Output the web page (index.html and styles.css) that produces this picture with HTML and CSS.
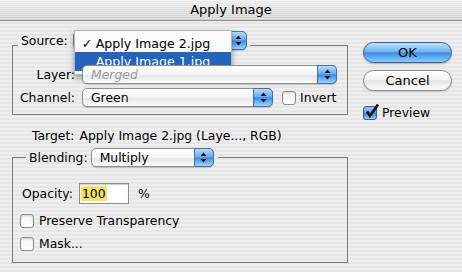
FILE: index.html
```html
<!DOCTYPE html>
<html lang="en">
<head>
    <meta charset="UTF-8">
    <title>Apply Image</title>
    <link rel="stylesheet" href="styles.css">
</head>
<body>
    <div class="window">
        <div class="titlebar">Apply Image</div>

        <div class="dialog">
            <div class="main">
                <fieldset class="group source">
                    <legend class="legend">
                        <span class="lbl">Source:</span>
                        <span class="popup popup-source">
                            <span class="arrows"><svg width="7" height="11" viewBox="0 0 7 11"><path d="M3.5 0.5 L6.5 4 L0.5 4 Z M0.5 7 L6.5 7 L3.5 10.5 Z" fill="#111"/></svg></span>
                            <span class="menu">
                                <span class="item"><span class="check">✓</span>Apply Image 2.jpg</span>
                                <span class="item active">Apply Image 1.jpg</span>
                                <svg class="cursor" width="13" height="19" viewBox="0 0 13 19"><path d="M1 1 L1 15 L4.5 11.5 L7 17.5 L9.2 16.6 L6.8 10.8 L11.5 10.8 Z" fill="#000" stroke="#fff" stroke-width="1"/></svg>
                            </span>
                        </span>
                    </legend>

                    <div class="row">
                        <span class="lbl col">Layer:</span>
                        <span class="popup disabled layer">
                            <span class="val">Merged</span>
                            <span class="arrows"><svg width="7" height="11" viewBox="0 0 7 11"><path d="M3.5 0.5 L6.5 4 L0.5 4 Z M0.5 7 L6.5 7 L3.5 10.5 Z" fill="#111"/></svg></span>
                        </span>
                    </div>
                    <div class="row">
                        <span class="lbl col">Channel:</span>
                        <span class="popup channel">
                            <span class="val">Green</span>
                            <span class="arrows"><svg width="7" height="11" viewBox="0 0 7 11"><path d="M3.5 0.5 L6.5 4 L0.5 4 Z M0.5 7 L6.5 7 L3.5 10.5 Z" fill="#111"/></svg></span>
                        </span>
                        <span class="checkbox invert"></span>
                        <span class="lbl">Invert</span>
                    </div>
                </fieldset>

                <div class="target">
                    <span class="target-lbl">Target:</span>
                    <span>Apply Image 2.jpg (Laye..., RGB)</span>
                </div>

                <fieldset class="group blending">
                    <legend class="legend">
                        <span class="lbl">Blending:</span>
                        <span class="popup popup-blend">
                            <span class="val">Multiply</span>
                            <span class="arrows"><svg width="7" height="11" viewBox="0 0 7 11"><path d="M3.5 0.5 L6.5 4 L0.5 4 Z M0.5 7 L6.5 7 L3.5 10.5 Z" fill="#111"/></svg></span>
                        </span>
                    </legend>

                    <div class="opacity">
                        <span class="lbl">Opacity:</span>
                        <span class="field"><span class="sel">100</span></span>
                        <span class="lbl pct">%</span>
                    </div>
                    <div class="check-row">
                        <span class="checkbox"></span>
                        <span class="lbl">Preserve Transparency</span>
                    </div>
                    <div class="check-row">
                        <span class="checkbox"></span>
                        <span class="lbl">Mask...</span>
                    </div>
                </fieldset>
            </div>

            <div class="side">
                <div class="btn btn-default">OK</div>
                <div class="btn btn-plain">Cancel</div>
                <div class="check-row preview">
                    <span class="checkbox checked"><svg width="16" height="16" viewBox="0 0 16 16"><path d="M3 7.5 L6 12 L14 0.5" fill="none" stroke="#111" stroke-width="2.6"/></svg></span>
                    <span class="lbl">Preview</span>
                </div>
            </div>
        </div>
    </div>
</body>
</html>
```

FILE: styles.css
```css
* {
    box-sizing: border-box;
}
body {
    margin: 0;
    font-family: "DejaVu Sans", sans-serif;
    font-size: 12.4px;
    color: #000;
    background: #e8e8e8;
}
.window {
    width: 462px;
    height: 272px;
    overflow: hidden;
    background: repeating-linear-gradient(to bottom, #eeeeee 0 2px, #e6e6e6 2px 4px);
}
.titlebar {
    height: 21px;
    line-height: 20px;
    text-align: center;
    font-size: 13px;
    border-bottom: 1px solid #8e8e8e;
    background: repeating-linear-gradient(to bottom, rgba(255,255,255,.3) 0 1px, rgba(0,0,0,0) 1px 2px),
                linear-gradient(#ececec, #d2d2d2);
}
.dialog {
    display: flex;
}
.main {
    width: 336px;
    margin-left: 12px;
}
.group {
    margin: 0;
    min-width: 0;
    border: 1px solid #7c7c7c;
}
.legend {
    display: flex;
    align-items: center;
    padding: 0 3px;
}
.lbl {
    white-space: nowrap;
}

/* popup buttons */
.popup {
    position: relative;
    display: inline-flex;
    align-items: center;
    height: 19px;
    padding-left: 8px;
    border: 1px solid #8d8d8d;
    border-radius: 5px;
    background: linear-gradient(#ffffff, #f4f4f4 50%, #e6e6e6 52%, #fbfbfb);
    box-shadow: 0 1px 1px rgba(0,0,0,.18);
}
.popup .arrows {
    display: flex;
    align-items: center;
    justify-content: center;
    margin-left: auto;
    width: 20px;
    height: 19px;
    margin-top: -1px;
    margin-bottom: -1px;
    margin-right: -1px;
    border: 1px solid #46709f;
    border-radius: 0 5px 5px 0;
    background: linear-gradient(#b7dcfb, #62a9ee 48%, #3b8ae1 52%, #9ad5ff);
}
.popup-source {
    width: 174px;
    margin-left: 5px;
}
.popup-source .arrows {
    width: 17px;
}
.popup-blend {
    width: 123px;
    margin-left: 3px;
}
.layer {
    width: 255px;
}
.channel {
    width: 191px;
}
.disabled .val {
    font-style: italic;
    color: #9a9a9a;
}
.source .legend {
    padding-bottom: 10px;
    margin-left: 5px;
}
.source {
    margin-top: 10px;
    padding: 5px 9px 7px 0;
}
.row {
    display: flex;
    align-items: center;
    margin-bottom: 4px;
}
.row:last-child {
    margin-bottom: 0;
}
.col {
    width: 62px;
    text-align: right;
    margin-right: 7px;
}

/* open menu over the source popup */
.menu {
    position: absolute;
    left: 0;
    top: -2px;
    width: 158px;
    padding: 4px 0 3px;
    background: rgba(250,250,250,.97);
    border: 1px solid #b5b5b5;
    box-shadow: 0 3px 6px rgba(0,0,0,.35);
    font-size: 12.6px;
}
.item {
    position: relative;
    display: block;
    height: 17px;
    line-height: 17px;
    padding-left: 21px;
}
.item.active {
    height: 19px;
    line-height: 19px;
    background: #2264be;
    color: #fff;
}
.check {
    position: absolute;
    left: 7px;
}
.cursor {
    position: absolute;
    left: 143px;
    top: 34px;
}

/* checkboxes */
.checkbox {
    display: inline-block;
    position: relative;
    flex: none;
    width: 14px;
    height: 14px;
    border: 1px solid #8a8a8a;
    border-radius: 3px;
    background: linear-gradient(#f4f4f4, #ffffff);
    box-shadow: inset 0 1px 2px rgba(0,0,0,.15);
}
.checkbox.checked {
    border-color: #3b5f8f;
    background: linear-gradient(#a8d4fb, #4f9be9 50%, #3a88de 52%, #8fd0ff);
}
.checkbox svg {
    position: absolute;
    left: 0;
    top: -3px;
}
.invert {
    margin-left: 9px;
    margin-right: 4px;
}

.target {
    display: flex;
    margin-top: 13px;
    padding-left: 20px;
    height: 15px;
}
.target-lbl {
    margin-right: 5px;
}

/* blending group */
.blending {
    margin-top: 5px;
    padding: 16px 9px 11px 9px;
}
.blending .legend {
    margin-left: 4px;
    padding: 0 4px 0 3px;
}
.opacity {
    display: flex;
    align-items: center;
}
.field {
    display: inline-flex;
    align-items: center;
    width: 50px;
    height: 21px;
    margin-left: 6px;
    padding-left: 1px;
    border: 1px solid #8c8c8c;
    background: #fff;
    box-shadow: inset 0 1px 1px rgba(0,0,0,.2);
}
.sel {
    background: #f9e060;
    padding: 0 1px;
}
.pct {
    margin-left: 9px;
}
.check-row {
    display: flex;
    align-items: center;
    margin-top: 9px;
}
.check-row + .check-row {
    margin-top: 8px;
}
.blending .check-row {
    margin-left: -2px;
}
.check-row .checkbox {
    margin-right: 5px;
}

/* right column */
.side {
    margin-left: 15px;
    padding-top: 21px;
}
.btn {
    width: 89px;
    height: 21px;
    line-height: 19px;
    text-align: center;
    font-size: 13px;
    border-radius: 11px;
    margin-bottom: 7px;
}
.btn-default {
    border: 1px solid #355f99;
    background: linear-gradient(#c2e2fd, #6fb3f1 45%, #3a8fe4 52%, #86cbff);
    box-shadow: 0 1px 2px rgba(0,0,0,.25);
}
.btn-plain {
    border: 1px solid #8c8c8c;
    background: linear-gradient(#ffffff, #f3f3f3 45%, #e4e4e4 52%, #fbfbfb);
    box-shadow: 0 1px 2px rgba(0,0,0,.2);
}
.preview {
    margin-top: 14px;
}
```
